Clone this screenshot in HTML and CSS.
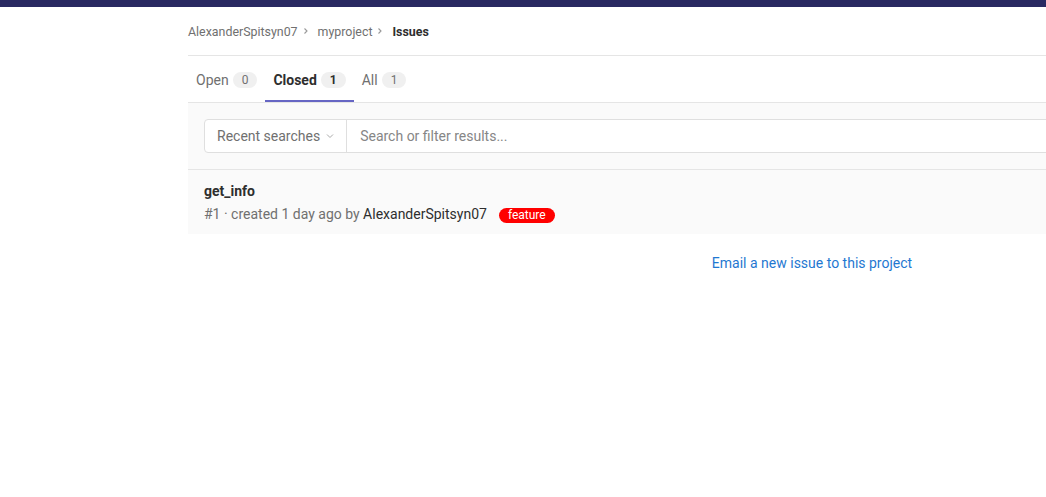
FILE: index.html
```html
<!DOCTYPE html>
<html>
<head>
<meta charset="utf-8">
<link rel="stylesheet" href="styles.css">
</head>
<body>
<div class="topbar"></div>
<div class="content">
  <nav class="breadcrumbs">
    <a class="crumb">AlexanderSpitsyn07</a>
    <span class="sep"><svg width="8" height="10" viewBox="0 0 8 10"><path d="M2.5 2.5l2.5 2.5-2.5 2.5" fill="none" stroke="#999" stroke-width="1.1"/></svg></span>
    <a class="crumb">myproject</a>
    <span class="sep"><svg width="8" height="10" viewBox="0 0 8 10"><path d="M2.5 2.5l2.5 2.5-2.5 2.5" fill="none" stroke="#999" stroke-width="1.1"/></svg></span>
    <span class="crumb current">Issues</span>
  </nav>
  <ul class="tabs">
    <li class="tab"><span>Open</span><span class="badge">0</span></li>
    <li class="tab active"><span>Closed</span><span class="badge">1</span></li>
    <li class="tab"><span>All</span><span class="badge">1</span></li>
  </ul>
  <div class="filter-bar">
    <div class="search">
      <div class="recent">Recent searches <svg width="8" height="8" viewBox="0 0 8 8"><path d="M1 2.5l3 3 3-3" fill="none" stroke="#aaa" stroke-width="1"/></svg></div>
      <div class="input">Search or filter results...</div>
    </div>
  </div>
  <div class="issue">
    <div class="issue-title">get_info</div>
    <div class="issue-meta">#1 · created 1 day ago by <span class="author">AlexanderSpitsyn07</span><span class="label">feature</span></div>
  </div>
  <div class="email"><a>Email a new issue to this project</a></div>
</div>
</body>
</html>
```
FILE: styles.css
```css
html, body {
  margin: 0;
  padding: 0;
  background: #fff;
  overflow: hidden;
  font-family: Roboto, "Noto Sans", sans-serif;
  color: #2e2e2e;
}
.topbar {
  height: 7px;
  background: #292961;
}
.content {
  margin-left: 188px;
  width: 1248px;
}
.breadcrumbs {
  height: 48px;
  display: flex;
  align-items: center;
  border-bottom: 1px solid #e5e5e5;
  font-size: 12.4px;
  color: #707070;
}
.crumb { color: #707070; }
.crumb.current { color: #2e2e2e; font-weight: bold; }
.sep {
  display: flex;
  align-items: center;
  margin: 0 8px 0 4px;
}
.tabs {
  list-style: none;
  margin: 0;
  padding: 0;
  display: flex;
  height: 46px;
  border-bottom: 1px solid #e5e5e5;
}
.tab {
  display: flex;
  align-items: center;
  padding: 3px 8px 0;
  font-size: 14px;
  color: #707070;
  border-bottom: 2px solid transparent;
  height: 41px;
}
.tab.active {
  color: #2e2e2e;
  font-weight: bold;
  border-bottom-color: #6666c4;
}
.badge {
  display: inline-block;
  margin-left: 4px;
  background: #f0f0f0;
  border-radius: 8px;
  padding: 0 9px;
  height: 16px;
  line-height: 16px;
  font-size: 12px;
  font-weight: normal;
  color: #707070;
}
.tab.active .badge { color: #2e2e2e; font-weight: bold; }
.filter-bar {
  background: #fafafa;
  padding: 16px;
  border-bottom: 1px solid #e5e5e5;
}
.search {
  display: flex;
  height: 32px;
  border: 1px solid #dfdfdf;
  border-radius: 4px;
  background: #fff;
  font-size: 14px;
}
.recent {
  display: flex;
  align-items: center;
  gap: 6px;
  padding: 0 12px;
  color: #707070;
  border-right: 1px solid #dfdfdf;
  white-space: nowrap;
}
.input {
  display: flex;
  align-items: center;
  padding: 0 13px;
  color: #868686;
  white-space: nowrap;
}
.issue {
  background: #fafafa;
  padding: 11px 16px 9px;
}
.issue-title {
  font-size: 14px;
  font-weight: bold;
  line-height: 20px;
}
.issue-meta {
  font-size: 14px;
  color: #707070;
  line-height: 22px;
  margin-top: 2px;
}
.author { color: #2e2e2e; }
.label {
  display: inline-block;
  background: #ff0000;
  color: #fff;
  font-size: 12px;
  line-height: 15px;
  padding: 0 9px;
  border-radius: 8px;
  margin-left: 12px;
}
.email {
  text-align: center;
  padding-top: 21px;
  font-size: 14px;
}
.email a { color: #1f78d1; }
```
